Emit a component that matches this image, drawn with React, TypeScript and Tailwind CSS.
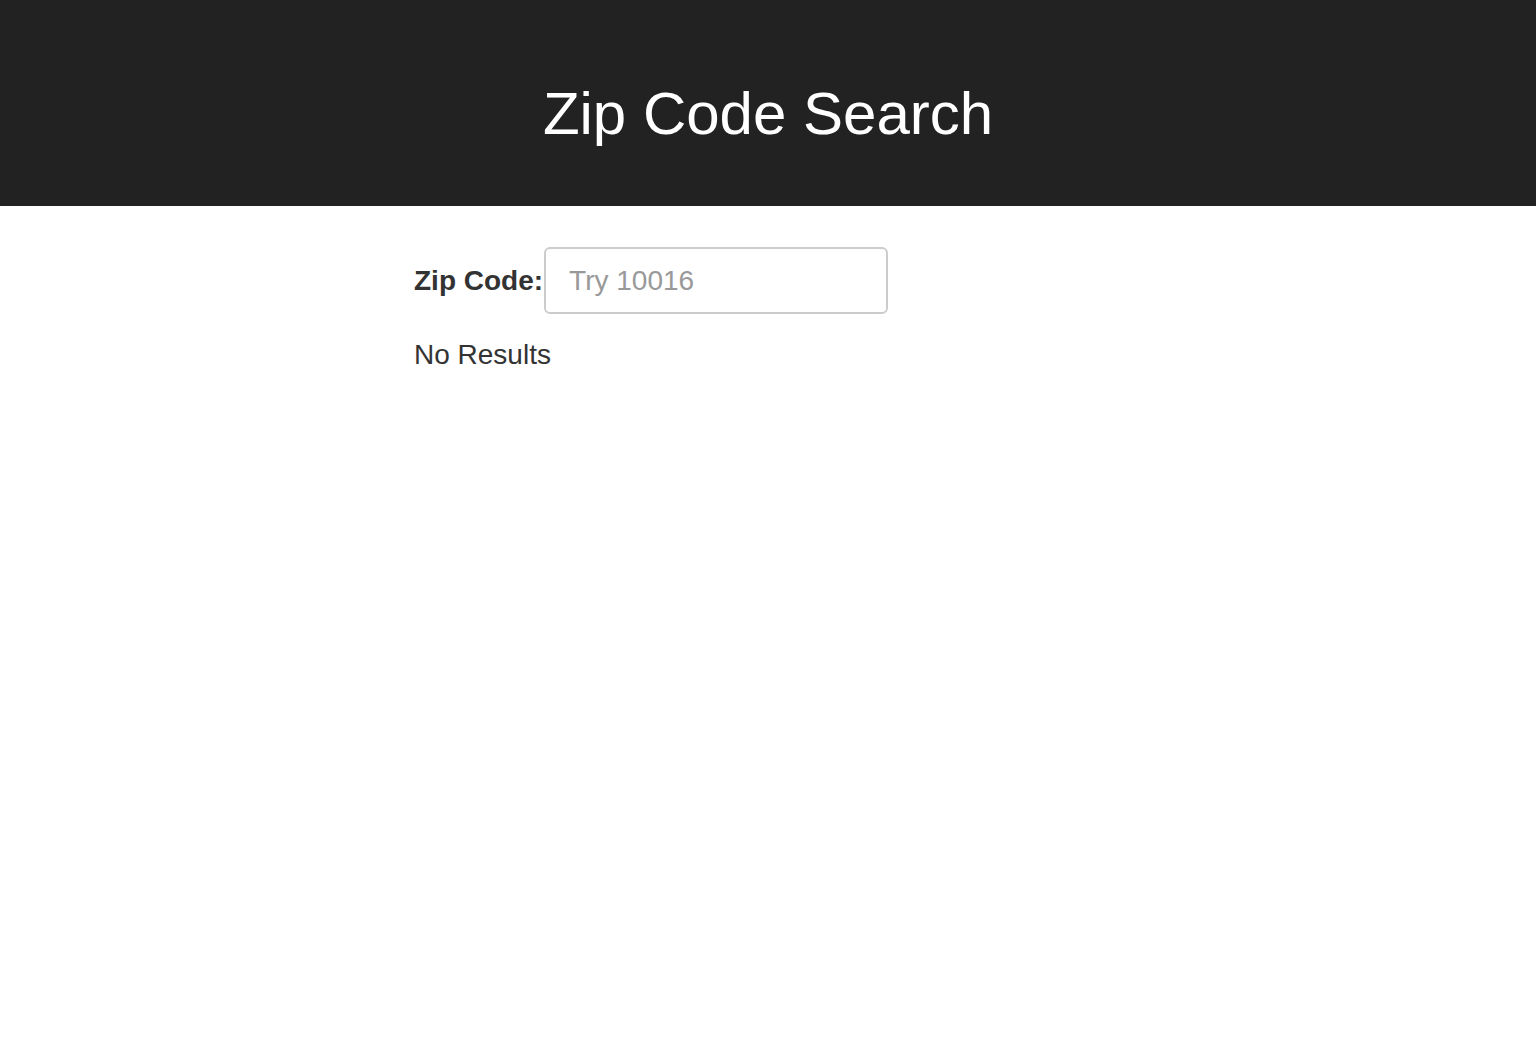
import { useState } from "react";

const App = () => {
    const [zip, setZip] = useState("");

    return (
        <div className="min-h-screen bg-white text-[#333] font-['Liberation_Sans',Arial,sans-serif]">
            <header className="h-[206px] bg-[#222] pt-[81px]">
                <h1 className="text-center text-[60px] leading-[66px] font-normal text-white">Zip Code Search</h1>
            </header>
            <main className="ml-[414px] pt-[41px]">
                <div className="flex items-center gap-[1px]">
                    <label htmlFor="zip" className="text-[28px] leading-[40px] font-bold">
                        Zip Code:
                    </label>
                    <input
                        id="zip"
                        value={zip}
                        onChange={(e) => setZip(e.target.value)}
                        placeholder="Try 10016"
                        className="w-[344px] h-[67px] rounded-[6px] border-2 border-[#ccc] px-[23px] text-[28px] text-[#555] placeholder:text-[#999] outline-none"
                    />
                </div>
                <div className="mt-[21px] text-[28px] leading-[40px]">No Results</div>
            </main>
        </div>
    );
};

export default App;
